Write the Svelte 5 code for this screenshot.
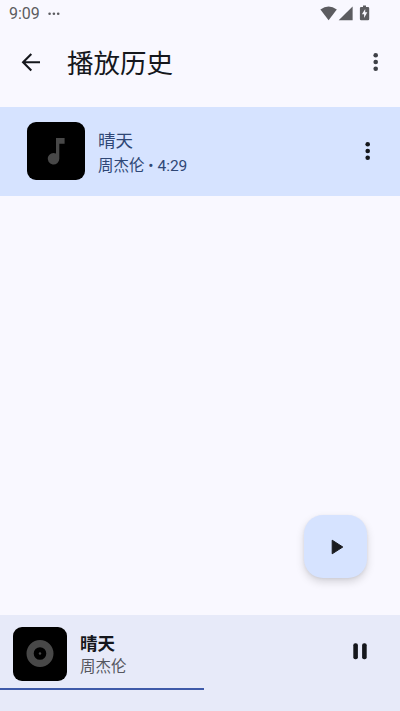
<script lang="ts">
    interface Track {
        title: string;
        artist: string;
        duration: number;
    }

    const history: Track[] = [{ title: "晴天", artist: "周杰伦", duration: 269 }];

    let index = $state(0);
    let playing = $state(true);
    let progress = $state(0.51);

    const current = $derived(history[index]);

    const formatTime = (s: number) =>
        `${Math.floor(s / 60)}:${String(s % 60).padStart(2, "0")}`;

    const playTrack = (i: number) => {
        index = i;
        progress = 0;
        playing = true;
    };
</script>

{#snippet moreIcon()}
    <svg width="8" height="20" viewBox="0 0 8 20">
        <circle cx="3.7" cy="3.3" r="2.3" />
        <circle cx="3.7" cy="10" r="2.3" />
        <circle cx="3.7" cy="16.7" r="2.3" />
    </svg>
{/snippet}

<div class="screen">
    <div class="status">
        <span class="clock">9:09</span>
        <svg class="dots" width="12" height="4" viewBox="0 0 12 4">
            <circle cx="1.6" cy="1.7" r="1.3" />
            <circle cx="5.9" cy="1.7" r="1.3" />
            <circle cx="10.2" cy="1.7" r="1.3" />
        </svg>
        <svg class="system" width="50" height="16" viewBox="0 0 50 16">
            <path d="M.4 3.6Q8.6-2.4 16.8 3.6L8.6 14.2Z" />
            <path d="M32.6 .6V14.2H18.7Z" />
            <path
                d="M43-.4h3v1.4h2q1.2 0 1.2 1.2v10.8q0 1.2-1.2 1.2h-6.9q-1.2 0-1.2-1.2V2.2q0-1.2 1.2-1.2H43Z"
            />
            <path class="bolt" d="M45.2 3v3.3h2.1l-3.2 5.6V8.3h-2.2Z" />
        </svg>
    </div>

    <header>
        <button class="back" aria-label="返回">
            <svg width="20" height="20" viewBox="0 0 20 20">
                <path d="M19 10.3H2.8M10.3 2.1L2.1 10.3L10.3 18.5" />
            </svg>
        </button>
        <h1>播放历史</h1>
        <button class="more" aria-label="更多">{@render moreIcon()}</button>
    </header>

    <main>
        {#each history as track, i}
            <div class="row" class:active={i === index}>
                <div class="cover">
                    <svg width="58" height="58" viewBox="0 0 58 58">
                        <path
                            d="M29 16h8.6v5.7h-5.3v15.1a5.8 5.8 0 1 1-3.3-5.3Z"
                        />
                    </svg>
                </div>
                <div class="text">
                    <span class="title">{track.title}</span>
                    <span class="sub"
                        >{track.artist} • {formatTime(track.duration)}</span
                    >
                </div>
                <button class="more" aria-label="更多">{@render moreIcon()}</button>
            </div>
        {/each}
    </main>

    <button class="fab" aria-label="播放" onclick={() => playTrack(0)}>
        <svg width="13" height="16" viewBox="0 0 13 16">
            <path d="M1.2 1.2L11.8 8L1.2 14.8Z" />
        </svg>
    </button>

    <footer>
        <div class="player">
            <div class="cover small">
                <svg width="54" height="54" viewBox="0 0 54 54">
                    <circle class="disc" cx="27" cy="26.5" r="9.9" />
                    <circle cx="27" cy="26.5" r="1.2" />
                </svg>
            </div>
            <div class="text">
                <span class="title">{current.title}</span>
                <span class="sub">{current.artist}</span>
            </div>
            <button
                class="toggle"
                aria-label={playing ? "暂停" : "播放"}
                onclick={() => (playing = !playing)}
            >
                <svg width="16" height="18" viewBox="0 0 16 18">
                    {#if playing}
                        <rect x="1.3" y="1.2" width="4.6" height="16" rx="2" />
                        <rect x="10.1" y="1.2" width="4.6" height="16" rx="2" />
                    {:else}
                        <path d="M3 1.5L14 9L3 16.5Z" />
                    {/if}
                </svg>
            </button>
        </div>
        <div class="progress" style:width="{progress * 100}%"></div>
    </footer>
</div>

<style>
    :global(body) {
        margin: 0;
    }

    .screen {
        position: relative;
        display: flex;
        flex-direction: column;
        height: 711px;
        overflow: hidden;
        background: #f9f8ff;
        color: #15171c;
        font-family: Roboto, "Noto Sans CJK SC", sans-serif;
    }

    svg {
        display: block;
        overflow: visible;
    }

    button {
        display: flex;
        align-items: center;
        justify-content: center;
        padding: 0;
        border: 0;
        background: none;
        color: inherit;
        cursor: pointer;
    }

    .status {
        display: flex;
        align-items: center;
        box-sizing: border-box;
        height: 27px;
        padding: 0 30px 0 9px;
        color: #5c5c60;
        fill: #5c5c60;
    }

    .clock {
        width: 39px;
        font-size: 16px;
        line-height: 28px;
    }

    .system {
        margin-left: auto;
    }

    .bolt {
        fill: #f9f8ff;
    }

    header {
        display: flex;
        align-items: center;
        height: 70px;
        margin-bottom: 10px;
        padding: 0 20.5px 0 21px;
    }

    .back svg {
        fill: none;
        stroke: #15171c;
        stroke-width: 2.1;
    }

    h1 {
        flex: 1;
        margin: 4px 0 0 26px;
        font-size: 26.5px;
        font-weight: 400;
        line-height: 36px;
    }

    header .more {
        fill: #3e4047;
    }

    main {
        flex: 1;
    }

    .row {
        display: flex;
        align-items: center;
        box-sizing: border-box;
        height: 88.5px;
        padding: 0 28px 0 26.5px;
        color: #2f4775;
    }

    .row.active {
        background: #d6e3ff;
    }

    .row .more {
        fill: #15171c;
    }

    .cover {
        width: 58px;
        height: 58px;
        border-radius: 9px;
        background: #000;
        fill: #484848;
    }

    .cover.small {
        width: 54px;
        height: 54px;
    }

    .disc {
        fill: none;
        stroke: #484848;
        stroke-width: 7.2;
    }

    .text {
        display: flex;
        flex: 1;
        flex-direction: column;
        margin: 3px 0 0 13.5px;
    }

    .title {
        font-size: 17.5px;
        line-height: 26px;
    }

    .sub {
        font-size: 15.5px;
        line-height: 24px;
    }

    .fab {
        position: absolute;
        right: 33px;
        bottom: 133px;
        width: 63px;
        height: 63px;
        border-radius: 19px;
        background: #d6e3ff;
        box-shadow:
            0 4px 8px rgba(0, 0, 0, 0.15),
            0 1px 3px rgba(0, 0, 0, 0.06);
    }

    .fab svg {
        margin-left: 3px;
    }

    .fab path {
        fill: #1a1b1f;
        stroke: #1a1b1f;
        stroke-linejoin: round;
    }

    footer {
        height: 96.5px;
        background: #e7eaf9;
    }

    .player {
        display: flex;
        align-items: center;
        height: 73px;
        padding: 0 32px 0 13px;
    }

    .player .cover {
        margin-top: 5px;
    }

    .player .title {
        font-weight: 700;
        line-height: 22px;
    }

    .player .sub {
        color: #55575f;
        line-height: 24px;
    }

    .player .text {
        margin: 9px 0 0 13px;
    }

    .toggle {
        fill: #15171c;
    }

    .progress {
        height: 2.5px;
        background: #3f5aa9;
    }
</style>
